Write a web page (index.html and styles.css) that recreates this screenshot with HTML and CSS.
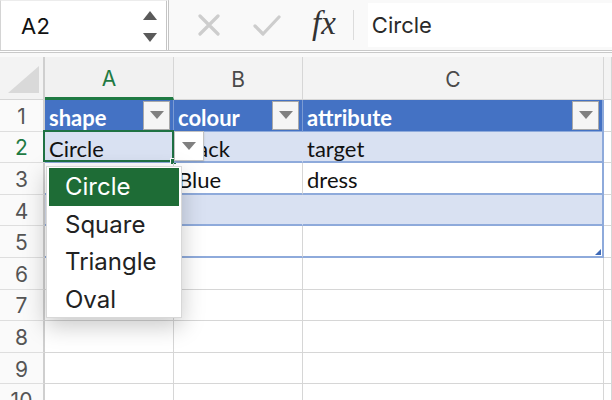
FILE: index.html
```html
<!DOCTYPE html>
<html>
<head>
<meta charset="utf-8">
<link rel="stylesheet" href="styles.css">
</head>
<body>
<div class="app">
  <div class="fbar">
    <div class="namebox">
      <span class="ref">A2</span>
      <div class="spin">
        <svg width="14" height="9" viewBox="0 0 14 9"><path d="M7 0 L14 9 L0 9 Z" fill="#5a5a5a"/></svg>
        <svg width="14" height="9" viewBox="0 0 14 9"><path d="M0 0 L14 0 L7 9 Z" fill="#5a5a5a"/></svg>
      </div>
    </div>
    <svg class="ic-x" width="22" height="22" viewBox="0 0 22 22"><path d="M2 2 L20 20 M20 2 L2 20" stroke="#cdcdcd" stroke-width="3.2" stroke-linecap="round"/></svg>
    <svg class="ic-ok" width="28" height="22" viewBox="0 0 28 22"><path d="M2 11 L10 19 L26 2" stroke="#cdcdcd" stroke-width="3.2" fill="none" stroke-linecap="round" stroke-linejoin="round"/></svg>
    <span class="fx">fx</span>
    <span class="sep"></span>
    <div class="fvalue">Circle</div>
  </div>
  <div class="rule"></div>
  <div class="sheet">
    <div class="corner"><svg width="31" height="27" viewBox="0 0 31 27"><path d="M31 0 L31 27 L0 27 Z" fill="#d9d9d9"/></svg></div>
    <div class="ch sel">A</div>
    <div class="ch">B</div>
    <div class="ch">C</div>
    <div class="ch"></div>

    <div class="rh">1</div>
    <div class="c th"><span>shape</span><span class="flt"><i></i></span></div>
    <div class="c th"><span>colour</span><span class="flt"><i></i></span></div>
    <div class="c th last"><span>attribute</span><span class="flt"><i></i></span></div>
    <div class="c"></div>

    <div class="rh selr">2</div>
    <div class="c band active">Circle<span class="selbox"><b class="handle"></b></span><span class="dv"><i></i></span></div>
    <div class="c band">Black</div>
    <div class="c band last">target</div>
    <div class="c"></div>

    <div class="rh">3</div>
    <div class="c tb"></div>
    <div class="c tb">Blue</div>
    <div class="c tb last">dress</div>
    <div class="c"></div>

    <div class="rh">4</div>
    <div class="c band"></div>
    <div class="c band"></div>
    <div class="c band last"></div>
    <div class="c"></div>

    <div class="rh">5</div>
    <div class="c tb"></div>
    <div class="c tb"></div>
    <div class="c tb last"><span class="rsz"></span></div>
    <div class="c"></div>

    <div class="rh">6</div><div class="c"></div><div class="c"></div><div class="c"></div><div class="c"></div>
    <div class="rh">7</div><div class="c"></div><div class="c"></div><div class="c"></div><div class="c"></div>
    <div class="rh">8</div><div class="c"></div><div class="c"></div><div class="c"></div><div class="c"></div>
    <div class="rh">9</div><div class="c"></div><div class="c"></div><div class="c"></div><div class="c"></div>
    <div class="rh">10</div><div class="c"></div><div class="c"></div><div class="c"></div><div class="c"></div>

    <ul class="popup">
      <li class="on">Circle</li>
      <li>Square</li>
      <li>Triangle</li>
      <li>Oval</li>
    </ul>
  </div>
</div>
</body>
</html>
```

FILE: styles.css
```css
* { box-sizing: border-box; }
html, body { margin: 0; padding: 0; }
body { width: 612px; height: 400px; overflow: hidden; background: #fff; font-family: Inter, "Noto Sans", sans-serif; }
.app { width: 612px; height: 400px; overflow: hidden; }

.fbar { height: 51px; display: flex; align-items: center; background: #f9f9f9; border-bottom: 1px solid #c9c9c9; }
.namebox { width: 169px; height: 50px; flex: none; display: flex; align-items: center; justify-content: space-between; padding: 0 9px 0 20px; background: #fff; border-left: 1px solid #d4d4d4; border-top: 1px solid #ececec; border-right: 3px double #c4c4c4; }
.ref { font-size: 22px; color: #111; letter-spacing: 0.2px; }
.spin { display: flex; flex-direction: column; gap: 13px; padding-top: 1px; }
.spin svg { display: block; }
.ic-x { margin-left: 29px; flex: none; }
.ic-ok { margin-left: 33px; flex: none; margin-top: 1px; }
.fx { margin-left: 31px; font-family: "Liberation Serif", "DejaVu Serif", serif; font-style: italic; font-size: 33px; color: #333; letter-spacing: 0px; margin-top: -3px; }
.sep { width: 1px; height: 30px; background: #dcdcdc; margin-left: 17px; }
.fvalue { margin-left: 14px; flex: 1; height: 44px; display: flex; align-items: center; padding-left: 4px; background: #fff; font-size: 22px; color: #2a2a2a; }

.rule { margin-top: 1px; height: 5px; border-top: 1px solid #c9c9c9; background: #f9f9f9; }

.sheet { position: relative; display: grid; grid-template-columns: 45px 129px 129px 301px 8px; grid-template-rows: 43px repeat(10, 31.6px); }
.corner { background: #f3f3f3; border-right: 2px solid #cfcfcf; border-bottom: 1px solid #d6d6d6; display: flex; align-items: flex-end; justify-content: flex-end; padding: 0 4px 6px 0; }
.corner svg { display: block; }
.ch { background: #f3f3f3; border-right: 1px solid #d6d6d6; border-bottom: 1px solid #d6d6d6; display: flex; align-items: center; justify-content: center; font-size: 21px; color: #4a4a4a; padding-top: 3px; }
.ch.sel { color: #1f7a43; border-bottom: 3px solid #1f7a43; background: #f1f1f1; }
.rh { background: #fafafa; border-right: 2px solid #cfcfcf; border-bottom: 1px solid #dedede; display: flex; align-items: center; justify-content: center; font-size: 21px; color: #555; padding-top: 2px; }
.rh.selr { color: #1f7a43; }

.c { position: relative; border-right: 1px solid #d6d6d6; border-bottom: 1px solid #d6d6d6; display: flex; align-items: center; padding: 4px 0 0 4px; font-family: Lato, "Noto Sans", sans-serif; font-size: 22px; color: #111; white-space: nowrap; }
.c.th { background: #4472c4; color: #fff; font-weight: 700; border-right-color: #7b9bd3; border-bottom-color: #8eaadb; justify-content: space-between; padding-right: 3px; }
.c.band { background: #d9e1f2; border-right-color: #d9e1f2; border-bottom: 2px solid #8eaadb; }
.c.tb { border-bottom: 2px solid #8eaadb; }
.c.last { border-right: 2px solid #8eaadb; }

.flt { width: 27px; height: 29px; background: #f5f5f5; border: 1px solid #a9a9a9; display: flex; align-items: center; justify-content: center; margin-top: -4px; }
.flt i, .dv i { display: block; width: 0; height: 0; border-left: 7px solid transparent; border-right: 7px solid transparent; border-top: 8px solid #808080; }

.selbox { position: absolute; left: -2px; top: -2px; right: -1px; bottom: -1px; border: 2px solid #1f7244; pointer-events: none; }
.handle { position: absolute; right: -5px; bottom: -5px; width: 7px; height: 7px; background: #1f7244; border: 1px solid #fff; }
.dv { position: absolute; left: 129px; top: -1px; width: 30px; height: 30px; background: #fff; border: 1px solid #c2c2c2; box-shadow: 0 1px 2px rgba(0,0,0,0.12); display: flex; align-items: center; justify-content: center; z-index: 2; }
.rsz { position: absolute; right: 1px; bottom: 1px; width: 0; height: 0; border-left: 6px solid transparent; border-bottom: 6px solid #3e6ab8; }

.popup { position: absolute; left: 46px; top: 109px; width: 136px; height: 152px; margin: 0; padding: 1px 2px; list-style: none; background: #fff; border: 1px solid #d8d8d8; box-shadow: 0 8px 22px rgba(0,0,0,0.22); z-index: 5; }
.popup li { height: 37.5px; display: flex; align-items: center; padding-left: 16px; font-family: Inter, "Noto Sans", sans-serif; font-size: 24px; color: #222; }
.popup li.on { background: #1e6c36; color: #fff; }
```
